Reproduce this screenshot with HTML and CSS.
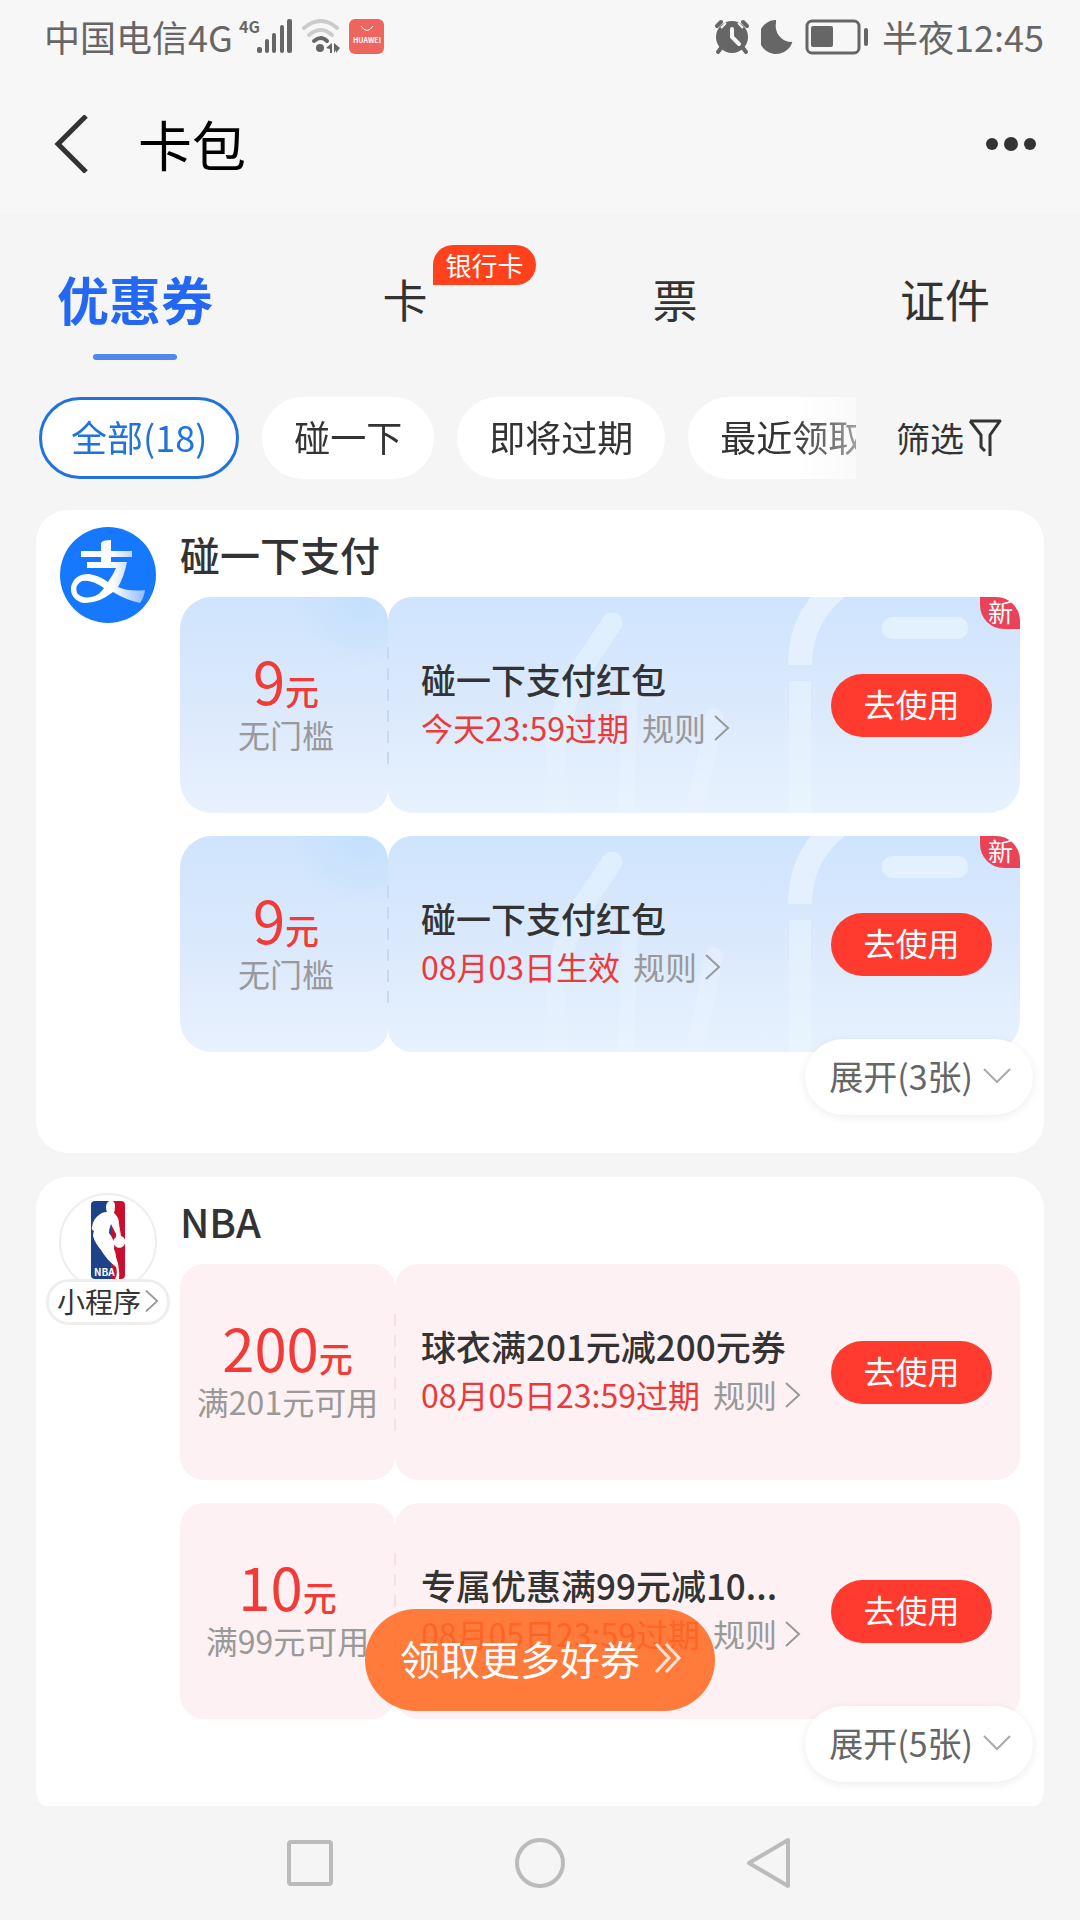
FILE: index.html
```html
<!DOCTYPE html>
<html lang="zh-CN">
<head>
    <meta charset="utf-8">
    <meta name="viewport" content="width=device-width, initial-scale=1">
    <title>卡包</title>
    <link rel="stylesheet" href="styles.css">
</head>
<body>
    <!-- shared shapes -->
    <svg class="defs" width="0" height="0" aria-hidden="true">
        <defs>
            <linearGradient id="fade" x1="0" y1="0" x2="0" y2="1">
                <stop offset="0" stop-color="#e4f3fd"/>
                <stop offset="1" stop-color="#e8f3fe" stop-opacity="0.4"/>
            </linearGradient>
            <linearGradient id="zhi" x1="0" y1="0" x2="1" y2="0">
                <stop offset="0.55" stop-color="#fff"/>
                <stop offset="1" stop-color="#8fbcff"/>
            </linearGradient>
            <symbol id="arrow" viewBox="0 0 16 26">
                <path d="M1 1l13 12L1 25" fill="none" stroke="currentColor" stroke-width="2"/>
            </symbol>
            <symbol id="down" viewBox="0 0 28 16">
                <path d="M1 1l13 13L27 1" fill="none" stroke="currentColor" stroke-width="2"/>
            </symbol>
            <symbol id="art" viewBox="0 0 632 216">
                <path d="M224 26L196 68Q174 104 168 150V216" fill="none" stroke="url(#fade)" stroke-width="21" stroke-linecap="round" opacity="0.7"/>
                <path d="M242 90L238 216" fill="none" stroke="#eaf5fe" stroke-width="16" stroke-linecap="round" opacity="0.35"/>
                <path d="M326 120Q318 165 306 216" fill="none" stroke="#eaf5fe" stroke-width="18" stroke-linecap="round" opacity="0.4"/>
                <path d="M450 -10Q412 20 412 68" fill="none" stroke="#e9f3fe" stroke-width="24" opacity="0.8"/>
                <path d="M412 84V216" fill="none" stroke="#eaf5fe" stroke-width="22" opacity="0.55"/>
                <rect x="494" y="20" width="86" height="22" rx="10" fill="#e6f2fd" opacity="0.85"/>
            </symbol>
        </defs>
    </svg>

    <div class="app">
        <div class="status-bar">
            <span class="carrier">中国电信4G</span>
            <svg class="signal" width="54" height="36" viewBox="0 0 54 36" fill="#666">
                <text x="0" y="14" font-size="16" font-weight="700">4G</text>
                <rect x="18" y="28" width="5" height="6" rx="2"/>
                <rect x="26" y="20" width="4" height="14" rx="2"/>
                <rect x="33" y="14" width="4" height="20" rx="2"/>
                <rect x="41" y="6" width="4" height="28" rx="2"/>
                <rect x="48" y="0" width="5" height="34" rx="2"/>
            </svg>
            <svg class="wifi" width="40" height="36" viewBox="0 0 40 36">
                <g fill="none" stroke-linecap="round" stroke-width="4">
                    <path d="M3 9Q20-5 36 9" stroke="#ccc"/>
                    <path d="M8 16Q20 6 31 16" stroke="#ccc"/>
                    <path d="M13 22Q20 16 26 22" stroke="#666"/>
                </g>
                <circle cx="19" cy="29" r="4" fill="#666"/>
                <path d="M25 29l6-5v10h-2v-4zM33 24l6 5-4 5v-3l-2 3z" fill="#666"/>
            </svg>
            <svg class="store" width="36" height="36" viewBox="0 0 36 36">
                <rect width="35" height="35" rx="6" fill="#ee6560"/>
                <path d="M12 7Q18 16 24 7" fill="none" stroke="#fff" stroke-width="1"/>
                <text x="18" y="24" font-size="7" font-weight="700" fill="#fff" text-anchor="middle">HUAWEI</text>
            </svg>
            <span class="spacer"></span>
            <svg width="36" height="36" viewBox="0 0 36 36">
                <circle cx="18" cy="18" r="16" fill="#666"/>
                <path d="M7 9L12 4M29 9L24 4" stroke="#f7f7f7" stroke-width="2"/>
                <path d="M3 7l4-4M29 3l4 4M7 29l-3 4M29 29l3 4" stroke="#666" stroke-width="4" stroke-linecap="round"/>
                <path d="M18 10v8l7 7" fill="none" stroke="#f7f7f7" stroke-width="4" stroke-linecap="round"/>
            </svg>
            <svg class="moon" width="32" height="36" viewBox="0 0 32 36">
                <path d="M15 1A17 17 0 1 0 31 24Q32 22 29 23A16 16 0 0 1 15 4Z" fill="#666"/>
            </svg>
            <svg class="battery" width="64" height="36" viewBox="0 0 64 36">
                <rect x="2" y="2" width="52" height="32" rx="5" fill="none" stroke="#666" stroke-width="3"/>
                <rect x="6" y="7" width="22" height="21" rx="2" fill="#666"/>
                <rect x="59" y="9" width="4" height="18" rx="2" fill="#666"/>
            </svg>
            <span class="clock">半夜12:45</span>
        </div>

        <header class="header">
            <button class="icon-button" aria-label="返回">
                <svg width="34" height="58" viewBox="0 0 34 58">
                    <path d="M32 1L4 29l28 28" fill="none" stroke="#333" stroke-width="5"/>
                </svg>
            </button>
            <h1>卡包</h1>
            <button class="icon-button" aria-label="更多">
                <svg width="50" height="16" viewBox="0 0 50 16" fill="#333">
                    <circle cx="6" cy="8" r="6"/>
                    <circle cx="25" cy="8" r="7"/>
                    <circle cx="44" cy="8" r="6"/>
                </svg>
            </button>
        </header>

        <nav class="tabs">
            <button class="tab active"><span class="tab-label">优惠券</span></button>
            <button class="tab"><span class="tab-label">卡<span class="tab-badge">银行卡</span></span></button>
            <button class="tab"><span class="tab-label">票</span></button>
            <button class="tab"><span class="tab-label">证件</span></button>
        </nav>

        <div class="filters">
            <div class="chips">
                <button class="chip selected">全部(18)</button>
                <button class="chip">碰一下</button>
                <button class="chip">即将过期</button>
                <button class="chip">最近领取</button>
            </div>
            <button class="filter-button">筛选
                <svg width="34" height="38" viewBox="0 0 34 38">
                    <path d="M2 2H32L22 16V37M2 2L13 16V28L17 32" fill="none" stroke="#333" stroke-width="3" stroke-linejoin="round"/>
                </svg>
            </button>
        </div>

        <main class="list">
            <section class="card">
                <div class="brand">
                    <svg width="98" height="98" viewBox="0 0 98 98">
                        <circle cx="49" cy="49" r="48" fill="#1677ff"/>
                        <path d="M22 25H42V17Q43 14 52 14V25H73V31H52V36H68Q65 51 59 61Q70 66 86 64Q85 72 81 77Q67 74 54 66Q39 78 24 77Q11 73 12 61Q15 48 30 48Q39 49 49 56Q54 49 57 42H28V36H42V31H22ZM45 62Q32 53 23 55Q15 59 18 67Q24 74 36 70Q42 67 45 62Z" fill="url(#zhi)" fill-rule="evenodd"/>
                    </svg>
                </div>
                <div class="card-body">
                    <h2>碰一下支付</h2>
                    <article class="ticket blue">
                        <div class="amount">
                            <p class="price"><b>9</b>元</p>
                            <p class="limit">无门槛</p>
                        </div>
                        <div class="detail">
                            <svg class="art" viewBox="0 0 632 216" preserveAspectRatio="xMaxYMid slice"><use href="#art"/></svg>
                            <div class="info">
                                <h3>碰一下支付红包</h3>
                                <p class="expire">今天23:59过期 <a href="#">规则<svg width="16" height="26"><use href="#arrow"/></svg></a></p>
                            </div>
                            <button class="use">去使用</button>
                            <span class="new">新</span>
                        </div>
                    </article>
                    <article class="ticket blue">
                        <div class="amount">
                            <p class="price"><b>9</b>元</p>
                            <p class="limit">无门槛</p>
                        </div>
                        <div class="detail">
                            <svg class="art" viewBox="0 0 632 216" preserveAspectRatio="xMaxYMid slice"><use href="#art"/></svg>
                            <div class="info">
                                <h3>碰一下支付红包</h3>
                                <p class="expire">08月03日生效 <a href="#">规则<svg width="16" height="26"><use href="#arrow"/></svg></a></p>
                            </div>
                            <button class="use">去使用</button>
                            <span class="new">新</span>
                        </div>
                    </article>
                </div>
                <button class="expand">展开(3张)<svg width="28" height="16"><use href="#down"/></svg></button>
            </section>

            <section class="card">
                <div class="brand">
                    <svg width="98" height="98" viewBox="0 0 98 98">
                        <circle cx="49" cy="49" r="48" fill="#fff" stroke="#eee" stroke-width="2"/>
                        <path d="M36 8H55V86H36Q32 86 32 82V12Q32 8 36 8Z" fill="#1d428a"/>
                        <path d="M52 8H62Q66 8 66 12V82Q66 86 62 86H52Z" fill="#c8102e"/>
                        <path d="M50 8Q55 6 56 12Q56 17 55 20Q60 24 60 31L62 43A6 6 0 1 1 55 46Q58 44 57 41L52 31Q50 36 50 40Q56 47 55 56Q57 60 57 64Q61 74 60 86H56Q59 82 57 74Q47 66 42 57Q36 50 34 43Q34 40 35 38Q32 37 33 34Q34 26 40 22Q43 19 48 19Q46 14 48 10Z" fill="#fff"/>
                        <text x="35" y="83" font-size="10" font-weight="700" fill="#fff">NBA</text>
                    </svg>
                    <a class="mini" href="#">小程序<svg width="14" height="24" viewBox="0 0 16 26"><use href="#arrow"/></svg></a>
                </div>
                <div class="card-body">
                    <h2>NBA</h2>
                    <article class="ticket pink">
                        <div class="amount">
                            <p class="price"><b>200</b>元</p>
                            <p class="limit">满201元可用</p>
                        </div>
                        <div class="detail">
                            <div class="info">
                                <h3>球衣满201元减200元券</h3>
                                <p class="expire">08月05日23:59过期 <a href="#">规则<svg width="16" height="26"><use href="#arrow"/></svg></a></p>
                            </div>
                            <button class="use">去使用</button>
                        </div>
                    </article>
                    <article class="ticket pink">
                        <div class="amount">
                            <p class="price"><b>10</b>元</p>
                            <p class="limit">满99元可用</p>
                        </div>
                        <div class="detail">
                            <div class="info">
                                <h3>专属优惠满99元减10...</h3>
                                <p class="expire">08月05日23:59过期 <a href="#">规则<svg width="16" height="26"><use href="#arrow"/></svg></a></p>
                            </div>
                            <button class="use">去使用</button>
                        </div>
                    </article>
                </div>
                <button class="expand">展开(5张)<svg width="28" height="16"><use href="#down"/></svg></button>
            </section>
        </main>

        <button class="more-coupons">领取更多好券
            <svg width="28" height="30" viewBox="0 0 28 30">
                <path d="M2 1l13 14L2 29M12 1l13 14-13 14" fill="none" stroke="#ffe3d3" stroke-width="3"/>
            </svg>
        </button>

        <footer class="system-nav">
            <button class="icon-button" aria-label="最近任务">
                <svg width="52" height="52" viewBox="0 0 52 52"><rect x="5" y="5" width="42" height="42" rx="2"/></svg>
            </button>
            <button class="icon-button" aria-label="主屏幕">
                <svg width="52" height="52" viewBox="0 0 52 52"><circle cx="26" cy="26" r="23"/></svg>
            </button>
            <button class="icon-button" aria-label="返回上一页">
                <svg width="52" height="52" viewBox="0 0 52 52"><path d="M5 26L44 3V49Z"/></svg>
            </button>
        </footer>
    </div>
</body>
</html>
```

FILE: styles.css
```css
* {
    box-sizing: border-box;
}

body {
    margin: 0;
    background-color: #f5f5f5;
    color: #333;
    font-family: "Noto Sans CJK SC", sans-serif;
}

h1, h2, h3, p {
    margin: 0;
    font-weight: 400;
}

button {
    padding: 0;
    border: none;
    background: none;
    color: inherit;
    font-family: inherit;
    cursor: pointer;
}

a {
    color: inherit;
    text-decoration: none;
}

svg {
    display: block;
    flex: none;
}

.defs {
    position: absolute;
}

.app {
    position: relative;
    display: flex;
    flex-direction: column;
    height: 100vh;
    overflow: hidden;
}

/* status bar */
.status-bar {
    display: flex;
    align-items: center;
    height: 74px;
    padding: 0 36px 0 44px;
    background-color: #f7f7f7;
    color: #666;
    font-size: 36px;
    line-height: 60px;
    flex: none;
}

.carrier, .clock {
    padding-bottom: 2px;
}

.signal {
    margin-left: 6px;
    overflow: visible;
}

.wifi {
    margin-left: 8px;
}

.store {
    margin-left: 8px;
}

.spacer {
    flex: 1;
}

.moon {
    margin-left: 11px;
}

.battery {
    margin: 0 13px 0 12px;
}

/* title bar */
.header {
    display: flex;
    align-items: center;
    height: 140px;
    padding: 0 44px 0 54px;
    background-color: #f7f7f7;
    color: #000;
    flex: none;
}

.header h1 {
    flex: 1;
    margin-left: 50px;
    font-size: 54px;
    line-height: 70px;
}

/* tabs */
.tabs {
    display: grid;
    grid-template-columns: repeat(4, 1fr);
    height: 170px;
    flex: none;
}

.tab {
    position: relative;
    font-size: 45px;
    line-height: 60px;
}

.tab-label {
    position: relative;
}

.tab.active {
    color: #2468f2;
    font-size: 52px;
    font-weight: 700;
}

.tab.active::after {
    content: "";
    position: absolute;
    bottom: 24px;
    left: 50%;
    width: 84px;
    height: 6px;
    margin-left: -42px;
    border-radius: 3px;
    background-color: #5087f0;
}

.tab-badge {
    position: absolute;
    left: 51px;
    bottom: 46px;
    padding: 0 12px;
    border-radius: 20px 20px 20px 0;
    background-color: #ff411c;
    color: #fff;
    font-size: 26px;
    line-height: 40px;
    white-space: nowrap;
}

/* filter chips */
.filters {
    display: flex;
    align-items: center;
    padding: 13px 78px 31px 39px;
    flex: none;
}

.chips {
    display: flex;
    flex: 1;
    gap: 23px;
    min-width: 0;
    overflow: hidden;
    -webkit-mask-image: linear-gradient(to right, #000 calc(100% - 64px), rgba(0, 0, 0, 0.45));
    mask-image: linear-gradient(to right, #000 calc(100% - 64px), rgba(0, 0, 0, 0.45));
}

.chip {
    height: 82px;
    padding: 0 29px 4px;
    border: 3px solid #fff;
    border-radius: 41px;
    background-color: #fff;
    font-size: 36px;
    white-space: nowrap;
    flex: none;
}

.chip.selected {
    border-color: #2272dd;
    color: #2272dd;
}

.filter-button {
    display: flex;
    align-items: center;
    gap: 4px;
    margin-left: 40px;
    font-size: 34px;
    line-height: 48px;
    white-space: nowrap;
}

/* coupon cards */
.list {
    display: flex;
    flex: 1;
    flex-direction: column;
    gap: 24px;
    min-height: 0;
    margin: 0 36px;
    border-radius: 0 0 12px 12px;
    overflow: hidden;
}

.card {
    position: relative;
    display: flex;
    padding: 0 24px 101px 0;
    border-radius: 32px;
    background-color: #fff;
    flex: none;
}

.brand {
    display: flex;
    flex-direction: column;
    align-items: center;
    width: 144px;
    padding-top: 16px;
    flex: none;
}

.mini {
    display: flex;
    align-items: center;
    gap: 4px;
    height: 46px;
    margin-top: -12px;
    padding: 0 8px 2px;
    border: 3px solid #eee;
    border-radius: 23px;
    background-color: #fff;
    font-size: 28px;
    white-space: nowrap;
    z-index: 1;
}

.mini svg {
    color: #999;
}

.card-body {
    flex: 1;
    min-width: 0;
}

.card-body h2 {
    height: 87px;
    font-size: 40px;
    font-weight: 500;
    line-height: 88px;
}

.ticket {
    display: flex;
    height: 216px;
}

.ticket + .ticket {
    margin-top: 23px;
}

.amount {
    display: flex;
    flex-direction: column;
    justify-content: center;
    width: 208px;
    padding-left: 4px;
    text-align: center;
    border-radius: 32px 24px 24px 32px;
    flex: none;
}

.detail {
    position: relative;
    display: flex;
    flex: 1;
    align-items: center;
    min-width: 0;
    padding: 0 28px 0 33px;
    border-radius: 24px 0 32px 24px;
}

/* perforation between the two halves */
.detail::before {
    content: "";
    position: absolute;
    top: 50px;
    left: -1px;
    width: 2px;
    height: 118px;
    background: repeating-linear-gradient(#c8d8ee 0 12px, transparent 12px 21px);
}

.blue .amount {
    background: radial-gradient(circle at 88% 0, #c3e0fd, rgba(195, 224, 253, 0) 70px), linear-gradient(#cfe4fd, #dbe9fc 50%, #e8f1fe);
}

.blue .detail {
    background: linear-gradient(#cfe4fe, #dbe9fc 50%, #e7f2fe);
    border-top-right-radius: 24px;
}

.pink .amount {
    width: 215px;
    padding-left: 0;
    border-radius: 24px;
    background-color: #fdf1f3;
}

.pink .detail {
    padding-left: 26px;
    border-radius: 24px;
    background-color: #fdf1f3;
}

.pink .detail::before {
    background: repeating-linear-gradient(#f8dfe3 0 12px, transparent 12px 21px);
}

.art {
    position: absolute;
    top: 0;
    left: 0;
    width: 100%;
    height: 100%;
    border-radius: 24px 24px 32px 24px;
}

.price {
    color: #f23a36;
    font-size: 34px;
    font-weight: 500;
    line-height: 56px;
}

.price b {
    font-size: 58px;
    font-weight: 400;
}

.limit {
    padding-bottom: 10px;
    color: #999;
    font-size: 32px;
    line-height: 30px;
    white-space: nowrap;
}

.info {
    position: relative;
    flex: 1;
    min-width: 0;
    padding-bottom: 4px;
    white-space: nowrap;
}

.info h3 {
    font-size: 35px;
    font-weight: 500;
    line-height: 49px;
}

.expire {
    display: flex;
    gap: 13px;
    color: #ea3a3a;
    font-size: 32px;
    line-height: 49px;
}

.expire a {
    display: flex;
    align-items: center;
    gap: 8px;
    color: #999;
}

.use {
    position: relative;
    width: 161px;
    height: 63px;
    padding-bottom: 4px;
    border-radius: 32px;
    background-color: #ff3b2f;
    color: #fff;
    font-size: 32px;
    flex: none;
}

.new {
    position: absolute;
    top: 0;
    right: 0;
    padding: 0 7px 3px 8px;
    border-radius: 0 24px 0 24px;
    background-color: #ea4358;
    color: #fff;
    font-size: 25px;
    line-height: 29px;
}

.expand {
    position: absolute;
    right: 11px;
    bottom: 38px;
    display: flex;
    align-items: center;
    gap: 10px;
    height: 76px;
    padding: 0 22px 3px 24px;
    border-radius: 38px;
    background-color: #fff;
    box-shadow: 0 2px 10px rgba(0, 0, 0, 0.08);
    color: #666;
    font-size: 34px;
}

.expand svg {
    color: #aaa;
}

.more-coupons {
    position: absolute;
    right: 0;
    bottom: 209px;
    left: 0;
    display: flex;
    align-items: center;
    gap: 14px;
    width: fit-content;
    height: 102px;
    margin: 0 auto;
    padding: 0 33px 4px 35px;
    border-radius: 51px;
    background-color: rgba(255, 106, 34, 0.88);
    color: #fff;
    font-size: 40px;
    white-space: nowrap;
}

/* system navigation */
.system-nav {
    display: flex;
    align-items: center;
    justify-content: center;
    gap: 178px;
    height: 114px;
    flex: none;
}

.system-nav svg {
    fill: none;
    stroke: #bbb;
    stroke-width: 4;
    stroke-linejoin: round;
}
```
